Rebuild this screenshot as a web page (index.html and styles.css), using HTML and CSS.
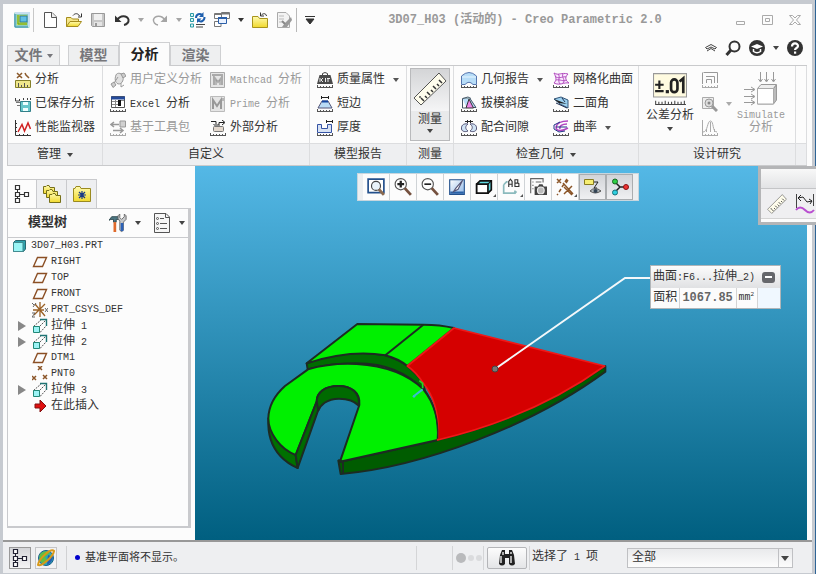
FILE: index.html
```html
<!DOCTYPE html>
<html lang="zh-CN">
<head>
<meta charset="utf-8">
<title>3D07_H03 (活动的) - Creo Parametric 2.0</title>
<link rel="stylesheet" href="styles.css">
</head>
<body>
<svg class="sprite" aria-hidden="true">
  <defs>
    <linearGradient id="yl" x1="0" y1="0" x2="0" y2="1"><stop offset="0" stop-color="#fffbb0"/><stop offset="1" stop-color="#f1d92c"/></linearGradient>
    <linearGradient id="steel" x1="0" y1="0" x2="1" y2="1"><stop offset="0" stop-color="#fff"/><stop offset="1" stop-color="#8fb8e8"/></linearGradient>
  </defs>
  <symbol id="ticks" viewBox="0 0 16 16"><path d="M0 15.5H16M.5 13v2M3.5 14v1M6.5 14v1M9.5 14v1M12.5 14v1M15.5 13v2" fill="none" stroke="currentColor" shape-rendering="crispEdges"/></symbol>
  <symbol id="drop" viewBox="0 0 6 4"><path d="M0 0H6L3 4Z" fill="currentColor"/></symbol>
  <symbol id="app" viewBox="0 0 16 16"><rect width="16" height="16" rx="2" fill="#8fd0c0"/><path d="M1 1H15V15" fill="none" stroke="#c7dff0" stroke-width="2"/><path d="M1 2V15H14" fill="none" stroke="#3c8db8" stroke-width="1"/><rect x="3" y="3" width="10" height="10" fill="#cde23c"/><path d="M4 3V12H13" fill="none" stroke="#5a9a2c"/><rect x="6" y="4" width="7" height="6" fill="#5fbfe4" stroke="#2b7aa0"/></symbol>
  <symbol id="new" viewBox="0 0 16 16"><path d="M2.5 .5H10L14.500 5V15.500H2.500Z" fill="#fff" stroke="#555"/><path d="M9.500 .5V5.500H14.500" fill="#eee" stroke="#555"/></symbol>
  <symbol id="open" viewBox="0 0 16 16"><path d="M.5 14.500V5.500H5L6.500 7H12.500V9" fill="#f6e78a" stroke="#a58c1e"/><path d="M.5 14.500L4 9.500H15.500L12 14.500Z" fill="url(#yl)" stroke="#a58c1e"/><path d="M7 3.500C9 1 12 1 13.500 4M15.500 1.500V5H12" fill="none" stroke="#333"/></symbol>
  <symbol id="save" viewBox="0 0 16 16"><path d="M1.500 1.500H14.500V14.500H2.500L1.500 13.500Z" fill="#c7c7c7" stroke="#999"/><path d="M4 2H12V8H4Z" fill="#f0f0f0"/><path d="M4 10H12V14H4Z" fill="#e4e4e4"/><path d="M5 11H7V14H5Z" fill="#999"/></symbol>
  <symbol id="undo" viewBox="0 0 16 16"><path d="M3 8C6 3 13 3 14.500 7.500C15 10 13 12.500 10 13" fill="none" stroke="currentColor" stroke-width="2"/><path d="M1 3.500V10H7.500Z" fill="currentColor"/></symbol>
  <symbol id="redo" viewBox="0 0 16 16"><path d="M13 8C10 3 3 3 1.500 7.500C1 10 3 12.500 6 13" fill="none" stroke="currentColor" stroke-width="1.500"/><path d="M15 3.500V10H8.500Z" fill="currentColor"/></symbol>
  <symbol id="regen" viewBox="0 0 16 16"><path d="M.5 1.500h3v3h-3zM.5 6.500h3v3h-3zM.5 12h3v3h-3z" fill="#d8f4f4" stroke="#2a9aa5"/><path d="M6 12.500H15M6 15H13" stroke="#444"/><path d="M6 6C6 2 10 1 12 3M14.500 5C14.500 9 11 10.500 8 8.500" fill="none" stroke="#1e5fae" stroke-width="2"/><path d="M13.500 0V5H9ZM7 11V6.500H11.500Z" fill="#1e5fae"/></symbol>
  <symbol id="wins" viewBox="0 0 16 16"><path d="M.5 1.500H7.500V6.500H.5ZM7.500 .5H15.500V6.500H7.500ZM.5 9.500H7V14.500H.5Z" fill="#fff" stroke="#777"/><path d="M1 2H7M8 1.500H15" stroke="#777" stroke-width="2"/><path d="M4.500 5.500H12.500V11.500H4.500Z" fill="#eaf2ff" stroke="#2b5fa8"/><path d="M4 6H13" stroke="#2b5fa8" stroke-width="2"/></symbol>
  <symbol id="foldclose" viewBox="0 0 16 16"><path d="M.5 15.500V4.500H6L7.500 6.500H15.500V15.500Z" fill="url(#yl)" stroke="#a8941c"/><path d="M14.500 4C14 1 11 1 9 3.500M8.500 .5V4H12" fill="none" stroke="#333"/></symbol>
  <symbol id="edit" viewBox="0 0 16 16"><path d="M1.500 .5H10L13.500 4V15.500H1.500Z" fill="#f3f3f3" stroke="#aaa"/><path d="M3 4H8M3 7H8M3 10H6" stroke="#bbb"/><path d="M15 5L9 11L6 15H11L16 8Z" fill="#999"/><path d="M6 9L9 12" stroke="#888" stroke-width="2"/></symbol>
  <symbol id="analysis" viewBox="0 0 16 16"><path d="M2 1L7 6M7 1L2 6M10 1L11 3L14 6" fill="none" stroke="#8b5a2b" stroke-width="1.500"/><path d="M.5 8.500H15.500V15.500H.5Z" fill="#efe78a" stroke="#85802a"/><path d="M3.500 11V15M6.500 13V15M9.500 11V15M12.500 13V15" stroke="#555"/></symbol>
  <symbol id="saved" viewBox="0 0 16 16"><path d="M.5 2V5H4.500M4.500 3V5M8.500 4V2M12.500 4V2M15.500 4V2" fill="none" stroke="#444"/><path d="M5.500 5.500H15.500V15.500H5.500Z" fill="#67c7cb" stroke="#317f88"/><path d="M8 6H13V9H8ZM8 12H13V15H8Z" fill="#edffff"/><path d="M1 6.500H5M2 9.500H5" stroke="#777"/></symbol>
  <symbol id="perf" viewBox="0 0 16 16"><path d="M.5 0V15.500H16M0 3.500H2M0 7.500H2M0 11.500H2M4.500 14V16M8.500 14V16M12.500 14V16" fill="none" stroke="#333"/><path d="M3 12L7 4.500L9.500 11L13 3L15.500 9" fill="none" stroke="#d02020" stroke-width="1.500"/></symbol>
  <symbol id="uda" viewBox="0 0 16 16"><path d="M6 3C7 0 13 1 13 5C14 9 11 12 9 12C6 12 4 8 6 3Z" fill="#e0e0e0" stroke="#999"/><path d="M1 12L4 10L6 13L3 15.500ZM11 2L14 1L16 4L13 6Z" fill="#ccc" stroke="#999"/><path d="M4 11L8 5M11 11V15L14 13" fill="none" stroke="#999"/></symbol>
  <symbol id="excel" viewBox="0 0 16 16"><path d="M1.500 .5H14.500V11.500H1.500Z" fill="#fff" stroke="#555"/><path d="M1 2H15" stroke="#244a9a" stroke-width="3"/><path d="M2 5.500H8M2 8.500H8M5.500 4V11M11 4.500H14" stroke="#888"/><path d="M8 4H11V10H8Z" fill="#111"/><use href="#ticks"/></symbol>
  <symbol id="tools" viewBox="0 0 16 16"><path d="M10 1H15.500V7H10Z" fill="#d0d0d0" stroke="#999"/><path d="M1 4.500H9M4 2L1 4.500L4 7M3 10.500H13M10 8L13 10.500L10 13" fill="none" stroke="#999" stroke-width="1.500"/><use href="#ticks"/></symbol>
  <symbol id="mathcad" viewBox="0 0 16 16"><path d="M.5 .5H14.500V15.500H.5Z" fill="#e5e5e5" stroke="#aaa"/><path d="M2 3H12V13M4 13V5L8 10L12 5V13" fill="none" stroke="#aaa" stroke-width="2"/><path d="M6 13V8M10 13V8" stroke="#888"/></symbol>
  <symbol id="prime" viewBox="0 0 16 16"><path d="M.5 .5H14.500V15.500H.5Z" fill="#e5e5e5" stroke="#bbb"/><path d="M3 13V4L7 10L11 4V13" fill="none" stroke="#999" stroke-width="2"/><path d="M13 2V5" stroke="#888"/></symbol>
  <symbol id="ext" viewBox="0 0 16 16"><path d="M1 1.500H6V5M3.500 4L6 6.500L8.500 4M9 6V2.500H14M12 0L15 2.500L12 5" fill="none" stroke="#222"/><rect x="3.500" y="6.500" width="10" height="5" rx="1" fill="#e3d8cd" stroke="#777"/><use href="#ticks"/></symbol>
  <symbol id="mass" viewBox="0 0 16 16"><path d="M5.500 3V1.500Q8 -.5 10.500 1.500V3" fill="none" stroke="#444"/><path d="M2.500 3H13.500L16 12H0Z" fill="#4a4a4a"/><path d="M3 6V10M6 6L4 8L6 10M8.500 6V10M11 6V10M10 6.500H13" fill="none" stroke="#eee"/><use href="#ticks"/></symbol>
  <symbol id="shortedge" viewBox="0 0 16 16"><path d="M4 1.500H12M4.500 0V3M11.500 0V3" stroke="#222"/><path d="M5 5H11L15 12H1Z" fill="#b9dcf6" stroke="#557"/><path d="M5 5.500H11" stroke="#1446a0" stroke-width="2"/><use href="#ticks"/></symbol>
  <symbol id="thick" viewBox="0 0 16 16"><path d="M.5 4.500H4.500V8.500H10.500V4.500H14.500V12.500H.5Z" fill="#d7e2f3" stroke="#3553a4"/><path d="M9 1.500H16M9.500 0V3M15.500 0V3" stroke="#222"/><use href="#ticks"/></symbol>
  <symbol id="ruler" viewBox="0 0 34 34"><path d="M1 26L26 1L33 9L8 33Z" fill="#fffdec" stroke="#555"/><path d="M11 29L8 26M14 26L12 24M17 23L14 20M20 20L18 18M23 17L20 14M26 14L24 12M29 11L26 8" stroke="#333" stroke-width="1.500"/><circle cx="7" cy="25" r="1" fill="#555"/></symbol>
  <symbol id="geo" viewBox="0 0 16 16"><path d="M.5 12.500V4Q8 -3 15.500 4V12.500H12Q8 8 4 12.500Z" fill="#b7ddf8" stroke="#5575ae"/><path d="M1 5H15" stroke="#e8f6ff"/><use href="#ticks"/></symbol>
  <symbol id="draft" viewBox="0 0 16 16"><path d="M1.500 2.500H9L15 11.500H5.500" fill="#b9dcf8" stroke="#456"/><path d="M1.500 2.500L7 1L10 2.500" fill="#dff" stroke="#456"/><path d="M8 3L12.500 12H5Z" fill="#ee86e8" stroke="#333"/><path d="M1.500 3V12H5" fill="none" stroke="#456"/><use href="#ticks"/></symbol>
  <symbol id="fit" viewBox="0 0 16 16"><path d="M7 4C2 3 0 6 .5 9C1 12 5 12 7 11C4 9 4 6 7 4ZM9 4C14 3 16 6 15.500 9C15 12 11 12 9 11C12 9 12 6 9 4Z" fill="#cfe2f4" stroke="#557"/><path d="M4 1.500H12M6.500 0V3M9.500 0V3" stroke="#222"/><use href="#ticks"/></symbol>
  <symbol id="mesh" viewBox="0 0 16 16"><path d="M1 1C6 4 8 0 15 2C11 6 13 9 16 11C11 10 7 14 1 11C4 8 3 5 1 1ZM5 2C8 5 4 8 7 12M10 2C8 5 13 8 10 11M3 5C7 7 10 4 13 5M3 8C7 7 10 10 14 8" fill="#fae8ff" stroke="#b14bbd"/><use href="#ticks"/></symbol>
  <symbol id="dihedral" viewBox="0 0 16 16"><path d="M1 3L8 1L15 4V12L7 8Z" fill="#9bd0f0" stroke="#357"/><path d="M1 3L14 8L6 7Z" fill="#222"/><path d="M3 7L14 12M9 2L12 6" stroke="#235" fill="none"/><use href="#ticks"/></symbol>
  <symbol id="curv" viewBox="0 0 16 16"><path d="M15 1C9 1 4 3 3 7C3 11 8 12 15 8M14 4C9 4 6 6 7 9" fill="none" stroke="#b145c0" stroke-width="1.500"/><path d="M7 2L1 5V9L6 12L12 11" fill="none" stroke="#238"/><path d="M3 7H14" stroke="#238"/><use href="#ticks"/></symbol>
  <symbol id="tol" viewBox="0 0 32 32"><path d="M.5 1.500H31.500V23.500H.5Z" fill="#fffbe0" stroke="#999"/><path d="M2 12H10M6 8V16M2 18H10" stroke="#222" stroke-width="2"/><rect x="12" y="17" width="3" height="3" fill="#222"/><rect x="17" y="7" width="6" height="12" rx="3" fill="none" stroke="#222" stroke-width="2.500"/><path d="M25 9L28.500 6V20" fill="none" stroke="#222" stroke-width="2.500"/><path d="M2 30.500H31M2.500 27V30M5.500 28V30M8.500 28V30M11.500 27V30M14.500 28V30M17.500 28V30M20.500 27V30M23.500 28V30M26.500 28V30M29.500 27V30" stroke="#444"/></symbol>
  <symbol id="sens" viewBox="0 0 16 16"><path d="M1.500 .5H15.500V11M.5 12V.5M4 4.500H12.500V11M4.500 11V7.500H9.500V11.500" fill="none" stroke="#999"/><use href="#ticks"/></symbol>
  <symbol id="opt" viewBox="0 0 16 16"><path d="M.5 1.500H11.500V12.500H.5Z" fill="#eee" stroke="#aaa"/><circle cx="7" cy="7" r="4" fill="#ddd" stroke="#999"/><circle cx="7" cy="7" r="1.500" fill="#888"/><path d="M10 10L15 15" stroke="#999" stroke-width="3"/></symbol>
  <symbol id="stat" viewBox="0 0 16 16"><path d="M1 12C6 12 5 1 8.500 1S10 12 15 12M4.500 9V12M8.500 2V12M12.500 9V12M.5 0V15" fill="none" stroke="#aaa"/><use href="#ticks"/></symbol>
  <symbol id="sim" viewBox="0 0 34 34"><path d="M16.500 0V9M22.500 0V9M29.500 0V9M14.500 7L16.500 10L18.500 7M20.500 7L22.500 10L24.500 7M27.500 7L29.500 10L31.500 7M0 17.500H10M0 24.500H10M0 30.500H10M7 15L11 17.500L7 20M7 22L11 24.500L7 27M7 28L11 30.500L7 33" fill="none" stroke="#999"/><path d="M13.500 16.500L17 12.500H32.500L29.500 16.500V32H13.500Z" fill="#eee" stroke="#999"/><path d="M32.500 13V28L29.500 32V16.500Z" fill="#bbb" stroke="#999"/><path d="M13.500 16.500H29.500V32H13.500Z" fill="#fff" stroke="#aaa"/></symbol>
  <symbol id="tree" viewBox="0 0 16 18"><path d="M1.500 .5h4v4h-4zM1.500 7.500h4v4h-4zM1.500 13.500h4v4h-4zM10.500 7.500h4v4h-4z" fill="#fff" stroke="currentColor" stroke-width="1.200"/><path d="M3.500 5V7M3.500 12V13M6 9.500H10" stroke="currentColor"/></symbol>
  <symbol id="folders" viewBox="0 0 18 18"><path d="M.5 8.500V1.500H3L4 .5H6L7 2.500H11.500V8.500Z" fill="url(#yl)" stroke="#77701a"/><path d="M3.500 12.500V5.500H6L7 4.500H9L10 6.500H14.500V12.500Z" fill="url(#yl)" stroke="#77701a"/><path d="M6.500 17.500V9.500H9L10 8.500H12L13 10.500H17.500V17.500Z" fill="url(#yl)" stroke="#77701a"/></symbol>
  <symbol id="fav" viewBox="0 0 18 16"><path d="M.5 15.500V2.500H2L3 .5H7L8 2.500H17.500V15.500Z" fill="url(#yl)" stroke="#9a8a20"/><path d="M9 5V13M5 9H13M6 6L12 12M12 6L6 12" stroke="#183a86" stroke-width="1.200"/></symbol>
  <symbol id="hammer" viewBox="0 0 20 20"><path d="M0 7L3 3H10L11 6H8V9H5V6H2Z" fill="#4e7884" stroke="#2d464d"/><path d="M5 9H8V20H5Z" fill="#e06a2c"/><path d="M12 0V4L14 6L17 3V0L19 2V6L16 9V18Q14 21 12 18V8L10 5V2Z" fill="#c7c9cb" stroke="#666"/><path d="M13 10H16V19H13Z" fill="#2c62b8"/></symbol>
  <symbol id="list" viewBox="0 0 16 20"><path d="M.5 .5H12L15.500 4V19.500H.5Z" fill="#f6f6f6" stroke="#555"/><path d="M11.500 .5V4.500H15.500" fill="none" stroke="#555"/><path d="M6 5.500H10M6 10.500H13M6 15.500H13" stroke="#555"/><circle cx="3.500" cy="5.500" r="1" fill="none" stroke="#555"/><circle cx="3.500" cy="10.500" r="1" fill="none" stroke="#555"/><circle cx="3.500" cy="15.500" r="1" fill="none" stroke="#555"/></symbol>
  <symbol id="part" viewBox="0 0 16 16"><path d="M1.500 4.500L3.500 2.500H13.500V11L11.500 13.500H1.500Z" fill="#2fa3ad" stroke="#2a6870"/><path d="M1.500 4.500H11V13.500H1.500Z" fill="#9af5f5" stroke="#438b90"/></symbol>
  <symbol id="plane" viewBox="0 0 16 16"><path d="M1.500 12.500L5.500 3.500H14.500L10.500 12.500Z" fill="none" stroke="#8b4f24" stroke-width="1.400"/></symbol>
  <symbol id="csys" viewBox="0 0 16 16"><path d="M8 0V15M2 13L13 2M3 2L13 14M1 8H12" stroke="#9a6025" stroke-width="1.300"/><path d="M0 1L2 3M4 1L1 5M0 11H3L0 15H3M13 6L16 10M16 6L13 10" stroke="#666" fill="none"/></symbol>
  <symbol id="extrude" viewBox="0 0 16 16"><path d="M1.500 8.500L9 2M7.500 8.500L14 2M8 14.500L14 8" stroke="#555" stroke-dasharray="2 1"/><path d="M8 1.500H14.500V8" fill="none" stroke="#1f7474" stroke-width="1.400"/><path d="M1.500 8.500H7.500V14.500H1.500Z" fill="#9cf3f5" stroke="#287"/></symbol>
  <symbol id="points" viewBox="0 0 16 16"><path d="M6 0L10 4M10 0L6 4M0 10L4 14M4 10L0 14M11 9L15 13M15 9L11 13" stroke="#8b5528" stroke-width="1.500"/></symbol>
  <symbol id="insert" viewBox="0 0 16 16"><path d="M3 6H8V2L14 8L8 14V10H3Z" fill="#e01010" stroke="#801010"/></symbol>
  <symbol id="refit" viewBox="0 0 16 16"><path d="M1 1H15V13H1Z" fill="#fff" stroke="#23508c" stroke-width="1.500"/><circle cx="8" cy="7" r="4" fill="#e9f3fa" stroke="#444"/><path d="M10.500 10L15 15" stroke="#8b6a50" stroke-width="2.500"/></symbol>
  <symbol id="zin" viewBox="0 0 16 16"><circle cx="6" cy="5.500" r="5" fill="#fff" stroke="#555"/><path d="M3 5.500H9M6 2.500V8.500" stroke="#222" stroke-width="2"/><path d="M9.500 9L15 15" stroke="#75513f" stroke-width="2.500"/></symbol>
  <symbol id="zout" viewBox="0 0 16 16"><circle cx="6" cy="5.500" r="5" fill="#fff" stroke="#555"/><path d="M3 5.500H9" stroke="#222" stroke-width="1.500"/><path d="M9.500 9L15 15" stroke="#75513f" stroke-width="2.500"/></symbol>
  <symbol id="repaint" viewBox="0 0 16 16"><path d="M1.500 1.500H14.500V14.500H1.500Z" fill="url(#steel)" stroke="#23508c"/><path d="M2 12H14V14H2Z" fill="#2a62a8"/><path d="M13 2L7 9L5 12L9 10Z" fill="#fff" stroke="#557"/></symbol>
  <symbol id="shade" viewBox="0 0 16 16"><path d="M1.500 5.500L4.500 2.500H14.500V10.500L11.500 13.500H1.500Z" fill="#5dd7df" stroke="#111" stroke-width="1.500"/><path d="M1.500 5.500H11.500V13.500H1.500Z" fill="#fff" stroke="#111" stroke-width="1.500"/><path d="M11.500 5.500L14.500 2.500" stroke="#111"/></symbol>
  <symbol id="views" viewBox="0 0 16 16"><path d="M1.500 6V13.500H11.500V11M1.500 6L4 3.500H5M11 14L13 12" fill="none" stroke="#8bbabd" stroke-width="1.500"/><path d="M6 8V3L7.500 1L9 3V8M6 5.500H9M11.500 1V8M11 1.500H14V4.500H11M14 4.500L15 5V7.500H11" fill="none" stroke="#333"/></symbol>
  <symbol id="camera" viewBox="0 0 16 16"><path d="M1.500 13.500V.5H12.500V4M3 3.500H4M6 3.500H11M3 6.500H4M3 9.500H4" fill="none" stroke="#666"/><path d="M5 7.500H8L9 5.500H12L13 7.500H16V15H5Z" fill="#444"/><circle cx="10.500" cy="11" r="3" fill="#bbb" stroke="#eee"/></symbol>
  <symbol id="datum" viewBox="0 0 18 18"><path d="M1 1L5 5M5 1L1 5M11 1L9 4M8 6L6 9M5 11L3 14M2 16L1 17M8 9L16 17M16 8L8 16M12 2L10 5M7 5L17 16" stroke="#8b5528" stroke-width="1.500" fill="none"/></symbol>
  <symbol id="annot" viewBox="0 0 18 18"><path d="M.5 1.500H9.500V6.500H.5Z" fill="#f7ee72" stroke="#887c20"/><path d="M10 4H14L10 10H13" fill="none" stroke="#222"/><path d="M6 13Q11 8 17 13Q11 17 6 13Z" fill="#aab3b8" stroke="#555"/><circle cx="11.500" cy="13" r="2" fill="#345"/></symbol>
  <symbol id="spin" viewBox="0 0 18 18"><path d="M4 4L9 9H14M9 9L4 14" stroke="#222" stroke-width="1.500" fill="none"/><circle cx="4" cy="3.500" r="2.500" fill="#2fcf45" stroke="#166320"/><circle cx="15" cy="9" r="2.500" fill="#e33" stroke="#811"/><circle cx="4" cy="14.500" r="2.500" fill="#2ecfe0" stroke="#16707c"/></symbol>
  <symbol id="globe" viewBox="0 0 18 18"><circle cx="9" cy="9" r="7.500" fill="#2ba9b6" stroke="#185c88"/><path d="M3 5Q8 0 13 4L8 8L10 12L5 14Q1 10 3 5Z" fill="#63bd43"/><path d="M11 6L16 8Q15 14 10 16Z" fill="#245fb2"/><path d="M1 16C4 18 16 8 17 2C14 -1 2 9 1 16Z" fill="none" stroke="#d89918" stroke-width="2"/></symbol>
  <symbol id="binoc" viewBox="0 0 18 18"><path d="M2 6L4 1H7V5H11V1H14L16 6L17 15Q14 18 11 15V9H7V15Q4 18 1 15Z" fill="#222"/><path d="M3 7V14M5 3V6M13 7V14M13 3V5" stroke="#ddd" stroke-width="1.500"/></symbol>
</svg>

<div class="window">
  <header class="titlebar">
    <div class="quick">
      <button class="ic app" aria-label="应用程序"><svg><use href="#app"/></svg></button>
      <button class="ic" aria-label="新建"><svg><use href="#new"/></svg></button>
      <button class="ic" aria-label="打开"><svg><use href="#open"/></svg></button>
      <button class="ic" aria-label="保存"><svg><use href="#save"/></svg></button>
      <button class="ic" aria-label="撤消"><svg><use href="#undo"/></svg></button>
      <button class="ic arrow off" aria-label="撤消列表"><svg><use href="#drop"/></svg></button>
      <button class="ic off" aria-label="重做"><svg><use href="#redo"/></svg></button>
      <button class="ic arrow off" aria-label="重做列表"><svg><use href="#drop"/></svg></button>
      <button class="ic" aria-label="重新生成"><svg><use href="#regen"/></svg></button>
      <button class="ic" aria-label="窗口"><svg><use href="#wins"/></svg></button>
      <button class="ic arrow" aria-label="窗口列表"><svg><use href="#drop"/></svg></button>
      <button class="ic" aria-label="关闭"><svg><use href="#foldclose"/></svg></button>
      <button class="ic last" aria-label="编辑"><svg><use href="#edit"/></svg></button>
      <button class="ic more" aria-label="自定义工具栏"><svg viewBox="0 0 10 8"><path d="M0 .5H10M1 3H9L5 8Z" fill="currentColor" stroke="currentColor"/></svg></button>
    </div>
    <h1>3D07_H03 (活动的) - Creo Parametric 2.0</h1>
    <div class="winbtns">
      <button aria-label="最小化"><svg viewBox="0 0 12 12"><path d="M1.500 7.500H9.500V10.500H1.500Z" fill="none" stroke="#aaa"/></svg></button>
      <button aria-label="最大化"><svg viewBox="0 0 12 12"><path d="M.5 1.500H10.500V10.500H.5ZM3.500 4.500H7.500V7.500H3.500Z" fill="none" stroke="#aaa"/></svg></button>
      <button aria-label="关闭窗口"><svg viewBox="0 0 12 12"><path d="M.5 1.500H3.500L6 4L8.500 1.500H11.500L7.500 6L11.500 10.500H8.500L6 8L3.500 10.500H.5L4.500 6Z" fill="none" stroke="#aaa"/></svg></button>
    </div>
  </header>

  <nav class="tabs">
    <button class="tab file">文件<svg class="dd"><use href="#drop"/></svg></button>
    <button class="tab">模型</button>
    <button class="tab active">分析</button>
    <button class="tab">渲染</button>
    <div class="help">
      <button aria-label="折叠功能区"><svg class="chev" viewBox="0 0 12 8"><path d="M.5 3.500L6 .5L11.500 3.500L10 5L6 3L2 5ZM2 7L6 4.500L10 7" fill="none" stroke="#444"/></svg></button>
      <button aria-label="搜索"><svg viewBox="0 0 16 16"><circle cx="9.500" cy="6.500" r="5" fill="none" stroke="#333" stroke-width="2"/><path d="M6 10L1.500 15" stroke="#333" stroke-width="3"/></svg></button>
      <button aria-label="学习"><svg viewBox="0 0 16 16"><circle cx="8" cy="8" r="8" fill="#333"/><path d="M2 6.500L8 4L14 6.500L8 9Z" fill="#fff"/><path d="M4.500 9V11.500Q8 14 11.500 11.500V9" fill="none" stroke="#fff" stroke-width="1.500"/></svg></button>
      <button aria-label="学习列表"><svg class="dd"><use href="#drop"/></svg></button>
      <button aria-label="帮助"><svg viewBox="0 0 16 16"><circle cx="8" cy="8" r="8" fill="#333"/><path d="M5 6.500C5 2.500 11 2.500 11 6C11 8 8 8 8 10" fill="none" stroke="#fff" stroke-width="2.200"/><rect x="7" y="11.500" width="2.200" height="2.200" fill="#fff"/></svg></button>
    </div>
  </nav>

  <section class="ribbon">
    <div class="group">
      <div class="cmds"><div class="col">
        <button class="cmd"><svg><use href="#analysis"/></svg>分析</button>
        <button class="cmd"><svg><use href="#saved"/></svg>已保存分析</button>
        <button class="cmd"><svg><use href="#perf"/></svg>性能监视器</button>
      </div></div>
      <div class="cap">管理<svg class="dd"><use href="#drop"/></svg></div>
    </div>
    <div class="group">
      <div class="cmds two"><div class="col">
        <button class="cmd" disabled><svg><use href="#uda"/></svg>用户定义分析</button>
        <button class="cmd"><svg><use href="#excel"/></svg><span><span class="en">Excel </span>分析</span></button>
        <button class="cmd" disabled><svg><use href="#tools"/></svg>基于工具包</button>
      </div><div class="col">
        <button class="cmd" disabled><svg><use href="#mathcad"/></svg><span><span class="en">Mathcad </span>分析</span></button>
        <button class="cmd" disabled><svg><use href="#prime"/></svg><span><span class="en">Prime </span>分析</span></button>
        <button class="cmd"><svg><use href="#ext"/></svg>外部分析</button>
      </div></div>
      <div class="cap">自定义</div>
    </div>
    <div class="group">
      <div class="cmds"><div class="col">
        <button class="cmd"><svg><use href="#mass"/></svg>质量属性<svg class="dd"><use href="#drop"/></svg></button>
        <button class="cmd"><svg><use href="#shortedge"/></svg>短边</button>
        <button class="cmd"><svg><use href="#thick"/></svg>厚度</button>
      </div></div>
      <div class="cap">模型报告</div>
    </div>
    <div class="group">
      <div class="cmds solo">
        <button class="measure"><span class="face"><svg><use href="#ruler"/></svg></span>测量<svg class="dd"><use href="#drop"/></svg></button>
      </div>
      <div class="cap">测量</div>
    </div>
    <div class="group">
      <div class="cmds"><div class="col">
        <button class="cmd"><svg><use href="#geo"/></svg>几何报告<svg class="dd"><use href="#drop"/></svg></button>
        <button class="cmd"><svg><use href="#draft"/></svg>拔模斜度</button>
        <button class="cmd"><svg><use href="#fit"/></svg>配合间隙</button>
      </div><div class="col">
        <button class="cmd"><svg><use href="#mesh"/></svg>网格化曲面</button>
        <button class="cmd"><svg><use href="#dihedral"/></svg>二面角</button>
        <button class="cmd"><svg><use href="#curv"/></svg>曲率<svg class="dd"><use href="#drop"/></svg></button>
      </div></div>
      <div class="cap">检查几何<svg class="dd"><use href="#drop"/></svg></div>
    </div>
    <div class="group">
      <div class="cmds study">
        <button class="big"><svg><use href="#tol"/></svg>公差分析<svg class="dd"><use href="#drop"/></svg></button>
        <div class="col">
          <button class="cmd" disabled aria-label="灵敏度"><svg><use href="#sens"/></svg></button>
          <button class="cmd" disabled aria-label="优化"><svg><use href="#opt"/></svg><svg class="dd"><use href="#drop"/></svg></button>
          <button class="cmd" disabled aria-label="统计"><svg><use href="#stat"/></svg></button>
        </div>
        <button class="big sim" disabled><svg><use href="#sim"/></svg><span class="en">Simulate</span>分析</button>
      </div>
      <div class="cap">设计研究</div>
    </div>
    <div class="group"><div class="cmds"></div><div class="cap"></div></div>
  </section>

  <main class="work">
    <aside class="side">
      <div class="sidetabs">
        <button class="on" aria-label="模型树"><svg class="t"><use href="#tree"/></svg></button>
        <button aria-label="文件夹浏览器"><svg><use href="#folders"/></svg></button>
        <button aria-label="收藏夹"><svg><use href="#fav"/></svg></button>
      </div>
      <div class="panel">
        <div class="phead">
          <h2>模型树</h2>
          <button aria-label="设置"><svg class="pic"><use href="#hammer"/></svg><svg class="dd"><use href="#drop"/></svg></button>
          <button aria-label="显示"><svg class="pic"><use href="#list"/></svg><svg class="dd"><use href="#drop"/></svg></button>
        </div>
        <ul class="mtree">
          <li class="root"><svg><use href="#part"/></svg><span class="en">3D07_H03.PRT</span></li>
          <li><svg><use href="#plane"/></svg><span class="en">RIGHT</span></li>
          <li><svg><use href="#plane"/></svg><span class="en">TOP</span></li>
          <li><svg><use href="#plane"/></svg><span class="en">FRONT</span></li>
          <li><svg><use href="#csys"/></svg><span class="en">PRT_CSYS_DEF</span></li>
          <li class="fold"><svg><use href="#extrude"/></svg><span>拉伸<span class="en"> 1</span></span></li>
          <li class="fold"><svg><use href="#extrude"/></svg><span>拉伸<span class="en"> 2</span></span></li>
          <li><svg><use href="#plane"/></svg><span class="en">DTM1</span></li>
          <li><svg><use href="#points"/></svg><span class="en">PNT0</span></li>
          <li class="fold"><svg><use href="#extrude"/></svg><span>拉伸<span class="en"> 3</span></span></li>
          <li><svg><use href="#insert"/></svg>在此插入</li>
        </ul>
      </div>
    </aside>

    <section class="canvas">
      <svg class="scene" viewBox="195 166 612 374" preserveAspectRatio="xMinYMin meet">
        <g transform="translate(250 310) scale(.33333)" stroke="#1d2b22" stroke-width="6" stroke-linejoin="round">
          <path fill="#007000" d="M55 325C54 350 56 370 62 388C75 428 105 457 143 474L137 435Z"/>
          <path fill="#005c00" d="M272 455L563 390Q850 320 1066 168V185C850 345 520 470 272 492L265 452Z"/>
          <path fill="#006c00" d="M170 160Q290 112 406 136Q445 148 472 168L520 214L525 245Q450 160 320 160Q240 160 173 178Z"/>
          <path fill="#00f000" d="M174 178Q240 158 320 162Q450 170 520 238Q570 300 563 390L270 455L328 285C332 248 304 228 265 228C225 228 200 247 200 275L137 435C92 418 55 370 55 325C56 285 77 253 105 228Z"/>
          <path fill="#006a00" d="M200 275C200 247 225 228 265 228C304 228 332 248 326 287Q308 266 267 266C230 266 210 286 203 305L143 474L137 435Z"/>
          <path fill="none" d="M200 275L205 303M265 450L279 456V490"/>
          <path fill="#00f000" d="M170 160L322 42L520 44Q570 44 612 54L472 168Q445 146 406 136Q300 118 170 160Z"/>
          <path fill="none" d="M520 44L406 136"/>
          <path fill="#d50000" stroke="#f01818" stroke-width="5" d="M612 54L1064 168Q850 322 563 390Q572 285 520 220Q500 188 472 168Z"/>
          <path fill="none" stroke-width="4" d="M563 386Q568 298 520 234"/>
          <path fill="none" stroke="#25d425" stroke-width="5" d="M508 212L518 220V235"/>
          <path fill="none" stroke="#3ab9d4" stroke-width="6" d="M518 238L492 258"/>
          <circle cx="492" cy="259" r="4" fill="#3ab9d4" stroke="none"/>
        </g>
        <path d="M495 369L625 278H650" fill="none" stroke="#f4f8fa" stroke-width="2"/>
        <circle cx="495" cy="369" r="3" fill="#777" stroke="#444"/>
      </svg>

      <div class="viewbar">
        <button aria-label="重新调整"><svg><use href="#refit"/></svg></button>
        <button aria-label="放大"><svg><use href="#zin"/></svg></button>
        <button aria-label="缩小"><svg><use href="#zout"/></svg></button>
        <button aria-label="重画"><svg><use href="#repaint"/></svg></button>
        <button class="sub" aria-label="显示样式"><svg><use href="#shade"/></svg></button>
        <button class="sub" aria-label="已保存方向"><svg><use href="#views"/></svg></button>
        <button aria-label="视图管理器"><svg><use href="#camera"/></svg></button>
        <button class="sub" aria-label="基准显示"><svg><use href="#datum"/></svg></button>
        <button class="on" aria-label="注释显示"><svg><use href="#annot"/></svg></button>
        <button class="on" aria-label="旋转中心"><svg><use href="#spin"/></svg></button>
      </div>

      <div class="callout">
        <div class="chead"><span>曲面<span class="en">:F6...</span>拉伸<span class="en">_2)</span></span><button aria-label="折叠"></button></div>
        <table><tr><th>面积</th><td class="num">1067.85</td><td class="en">mm<sup>2</sup></td><td class="fill"></td></tr></table>
      </div>
    </section>
  </main>

  <footer class="status">
    <button class="sq on" aria-label="模型树显示"><svg><use href="#tree"/></svg></button>
    <button class="sq" aria-label="浏览器显示"><svg><use href="#globe"/></svg></button>
    <p class="msg">基准平面将不显示。</p>
    <span class="cell"></span>
    <span class="dots"><i></i><i></i><i></i></span>
    <span class="findwrap"><button class="find" aria-label="查找"><svg><use href="#binoc"/></svg></button></span>
    <label class="sel" for="filter">选择了<span class="en"> 1 </span>项</label>
    <span class="pick"><select id="filter"><option>全部</option></select></span>
  </footer>
</div>

<div class="float">
  <div class="fhead"></div>
  <div class="fbody">
    <button aria-label="测量"><svg><use href="#ruler"/></svg></button>
    <button aria-label="长度"><svg viewBox="0 0 20 20"><path d="M1.500 0V14M18.500 0V12" stroke="#444"/><path d="M3 4L8 3L12 8L17 7M3 4L6 1M3 4L6 7M17 7L14 5M17 7L15 10" fill="none" stroke="#222"/><path d="M1 16Q5 11 10 16T19 16" fill="none" stroke="#b94fd0" stroke-width="2"/></svg></button>
  </div>
</div>
</body>
</html>
```
FILE: styles.css
```css
* { box-sizing: border-box; }

body {
  margin: 0;
  height: 100vh;
  overflow: hidden;
  position: relative;
  padding-right: 1px;
  background: #2e6496;
  color: #333;
  font: 12px/16px "Liberation Mono", "Noto Sans CJK SC", monospace;
}

button {
  margin: 0;
  padding: 0;
  border: 0;
  background: none;
  color: inherit;
  font: inherit;
}

svg { display: block; flex: none; }
.sprite { position: absolute; width: 0; height: 0; }
.dd { width: 6px; height: 4px; color: #444; }
.en { font-size: 10px; white-space: pre; }

.window {
  height: 100%;
  display: flex;
  flex-direction: column;
  background: #fcfcfc;
  border: solid #c6cad0;
  border-width: 4px 3px 1px;
}

/* title bar */
.titlebar {
  display: flex;
  align-items: center;
  height: 32px;
  padding: 0 11px;
}
.quick { display: flex; align-items: center; gap: 8px; }
.ic { display: flex; align-items: center; height: 24px; }
.ic svg { width: 16px; height: 16px; }
.ic.arrow svg { width: 6px; height: 4px; }
.ic.more svg { width: 10px; height: 8px; }
.ic.off { color: #a5a5a5; }
.ic.app { padding-right: 3px; border-right: 1px solid #c8c8c8; }
.ic.last { padding-right: 4px; border-right: 1px solid #b8b8b8; }
.titlebar h1 {
  flex: 1;
  margin: 0;
  text-align: center;
  white-space: nowrap;
  font-size: 12px;
  font-weight: bold;
  color: #999;
}
.winbtns { display: flex; gap: 15px; }
.winbtns svg { width: 12px; height: 12px; }

/* ribbon tabs */
.tabs {
  display: flex;
  align-items: flex-end;
  height: 29px;
  padding: 0 5px 0 4px;
}
.tab {
  display: flex;
  align-items: center;
  justify-content: center;
  gap: 4px;
  width: 51px;
  height: 20px;
  border: 1px solid #cfd0d2;
  border-bottom: 0;
  background: #eeeff0;
  font-size: 14px;
  font-weight: bold;
  color: #77777b;
}
.tab.file { width: 53px; margin-right: 8px; }
.tab .dd { color: #77777b; }
.tab.active {
  position: relative;
  height: 24px;
  margin-bottom: -1px;
  background: #fcfcfc;
  color: #222;
}
.help {
  display: flex;
  align-items: center;
  gap: 8px;
  margin-left: auto;
  padding: 0 4px 9px 0;
}
.help svg { width: 16px; height: 16px; }
.help .chev { width: 12px; height: 8px; }
.help .dd { width: 6px; height: 4px; }

/* ribbon */
.ribbon {
  display: grid;
  grid-template-columns: 95fr 207fr 97fr 47fr 185fr 157fr 11fr;
  height: 101px;
  margin: 0 5px 0 4px;
  border: solid #c9cacc;
  border-width: 1px 0 1px 1px;
}
.group {
  display: flex;
  flex-direction: column;
  min-width: 0;
  border-right: 1px solid #dcdddf;
}
.cmds { flex: 1; display: flex; gap: 10px; padding: 2px 0 0 7px; }
.cmds.two .col { width: 90px; }
.cmd {
  display: flex;
  align-items: center;
  gap: 4px;
  height: 24px;
  white-space: nowrap;
}
.cmd svg { width: 16px; height: 16px; color: #555; }
.cmd .dd { width: 6px; height: 4px; margin-left: 4px; }
.cmd:disabled, .big:disabled { color: #999; }
.cmd:disabled svg { color: #aaa; }
.cap {
  display: flex;
  align-items: center;
  justify-content: center;
  gap: 6px;
  height: 22px;
  border-top: 1px solid #dcdddf;
  background: #eeeff1;
}
.cmds.solo { justify-content: center; padding: 2px 3px 0; }
.measure {
  display: flex;
  flex-direction: column;
  align-items: center;
  flex: 1;
  height: 73px;
  border: 1px solid #b9babc;
  background: #e9eaeb;
}
.measure .face {
  align-self: stretch;
  display: flex;
  justify-content: center;
  height: 42px;
  margin-bottom: 1px;
  padding-top: 3px;
  background: linear-gradient(#d4d5d7, #f5f5f6);
}
.measure .face svg { width: 34px; height: 34px; }
.measure .dd { margin-top: 1px; }
.cmds.study { gap: 8px; }
.big {
  display: flex;
  flex-direction: column;
  align-items: center;
  width: 48px;
  padding-top: 4px;
  line-height: 12px;
}
.big > svg { width: 34px; height: 34px; margin-bottom: 4px; }
.big > .dd { width: 6px; height: 4px; margin: 5px 0 0; }
.big.sim { margin-left: -3px; }

/* work area */
.work { flex: 1; display: flex; min-height: 0; padding-right: 5px; }
.side {
  width: 192px;
  display: flex;
  flex-direction: column;
  padding: 13px 4px 12px;
}
.sidetabs { display: flex; }
.sidetabs button {
  display: flex;
  align-items: center;
  justify-content: center;
  width: 30px;
  height: 29px;
  border: 1px solid #c9cacd;
  border-width: 1px 1px 0 0;
  background: #eeeff1;
}
.sidetabs .on { background: #fcfcfc; border-left-width: 1px; }
.sidetabs svg { width: 18px; height: 18px; }
.sidetabs .t { width: 16px; }
.panel {
  flex: 1;
  border: solid #c9cacd;
  border-width: 1px 3px 2px 1px;
}
.phead {
  display: flex;
  align-items: center;
  gap: 12px;
  height: 29px;
  padding: 0 3px 0 20px;
  border-bottom: 1px solid #c9cacd;
}
.phead h2 { flex: 1; margin: 0; font-size: 13px; }
.phead button { display: flex; align-items: center; gap: 8px; }
.pic { width: 18px; height: 20px; }
.mtree { margin: 0; padding: 0; list-style: none; }
.mtree li {
  position: relative;
  display: flex;
  align-items: center;
  gap: 3px;
  height: 16px;
  padding-left: 24px;
}
.mtree li.root { padding-left: 4px; }
.mtree svg { width: 16px; height: 16px; }
.fold::before {
  content: "";
  position: absolute;
  left: 10px;
  border: solid transparent;
  border-width: 5px 0 5px 8px;
  border-left-color: #888;
}

/* graphics area */
.canvas {
  flex: 1;
  position: relative;
  overflow: hidden;
  background: linear-gradient(#54b8e6, #005f80);
}
.scene { position: absolute; inset: 0; width: 100%; height: 100%; }
.viewbar {
  position: absolute;
  top: 7px;
  left: 162px;
  display: flex;
  padding: 0 5px;
  border: 1px solid #c8d6de;
  background: #eceef0;
}
.viewbar button {
  position: relative;
  display: flex;
  align-items: center;
  justify-content: center;
  width: 27px;
  height: 26px;
  border-right: 1px solid #cfd3d6;
  background: #fcfcfc;
}
.viewbar svg { width: 18px; height: 18px; }
.viewbar .on { border: 1px solid #aaadb0; background: linear-gradient(#d2d4d8, #eff0f2); }
.viewbar .sub::after {
  content: "";
  position: absolute;
  right: 1px;
  bottom: 3px;
  border: solid transparent;
  border-width: 3px 0 0 3px;
  border-bottom: 0;
  border-right: 3px solid #555;
}
.callout {
  position: absolute;
  top: 99px;
  left: 455px;
  width: 131px;
  border: 1px solid #b0b5b8;
  background: #fcfcfc;
}
.chead {
  display: flex;
  align-items: center;
  justify-content: space-between;
  height: 22px;
  padding: 0 5px 0 2px;
  white-space: nowrap;
  background: linear-gradient(#fcfcfc, #e0e1e3);
}
.chead button {
  width: 13px;
  height: 11px;
  border-radius: 3px;
  background: linear-gradient(#fff, #fff) center / 7px 2px no-repeat #66676b;
}
.callout table { width: 100%; border-collapse: collapse; }
.callout th, .callout td {
  height: 20px;
  padding: 0 2px;
  border-right: 1px solid #d4d4d4;
  font-weight: normal;
  line-height: 16px;
}
.callout .num { font-weight: bold; color: #666; }
.callout sup { font-size: 6px; line-height: 0; }
.callout .fill { width: 23px; border: 0; background: #f0f8ff; }

/* floating tool window */
.float {
  position: absolute;
  top: 166px;
  right: 0;
  width: 58px;
  height: 59px;
  border: 3px solid #b4b5b7;
  border-right: 0;
  background: #fcfcfc;
}
.fhead { height: 20px; border-bottom: 1px solid #c4c5c7; background: linear-gradient(#f8f8f8, #e2e3e5); }
.fbody {
  display: flex;
  align-items: center;
  gap: 8px;
  height: 30px;
  padding-left: 6px;
  overflow: hidden;
  background: #efeff1;
  border-bottom: 1px solid #d4d4d4;
}
.fbody svg { width: 20px; height: 20px; }

/* status bar */
.status {
  display: flex;
  align-items: center;
  height: 33px;
  padding: 0 19px 0 6px;
  border-top: 2px solid #989898;
  background: #eeeff1;
}
.sq {
  display: flex;
  align-items: center;
  justify-content: center;
  width: 22px;
  height: 22px;
  margin-right: 4px;
  border: 1px solid #c4c5c8;
  background: #f2f2f3;
}
.sq svg { width: 18px; height: 18px; }
.sq.on { border-color: #999; background: linear-gradient(#d4d5d8, #f4f4f5); color: #223; }
.msg {
  flex: 1;
  display: flex;
  align-items: center;
  gap: 5px;
  height: 24px;
  margin: 0 0 0 5px;
  padding-left: 8px;
  border-left: 1px solid #d0d1d3;
  font-size: 11px;
}
.msg::before { content: ""; width: 5px; height: 5px; border-radius: 50%; background: #00c; }
.cell { width: 36px; height: 24px; border-left: 1px solid #d4d5d7; }
.dots {
  display: flex;
  align-items: center;
  gap: 2px;
  width: 31px;
  height: 24px;
  padding-left: 3px;
  border-left: 1px solid #d4d5d7;
}
.dots i { width: 6px; height: 6px; border-radius: 50%; background: #dadbdd; }
.dots i:first-child { width: 10px; height: 10px; background: #b9babc; }
.findwrap {
  display: flex;
  align-items: center;
  width: 47px;
  height: 24px;
  padding-left: 3px;
  border: solid #d4d5d7;
  border-width: 0 1px;
}
.find {
  display: flex;
  align-items: center;
  justify-content: center;
  width: 40px;
  height: 22px;
  border: 1px solid #b4b5b8;
  border-radius: 2px;
  background: linear-gradient(#fcfcfc, #e4e5e7);
}
.find svg { width: 18px; height: 18px; }
.sel { width: 97px; padding-left: 2px; white-space: nowrap; }
.pick { position: relative; width: 166px; height: 20px; }
.pick select {
  appearance: none;
  width: 100%;
  height: 20px;
  padding: 0 4px;
  border: 1px solid #bfc0c3;
  border-radius: 0;
  background: linear-gradient(#e9eaec, #fcfcfc);
  color: #333;
  font: inherit;
}
.pick::after {
  content: "";
  position: absolute;
  right: 4px;
  top: 8px;
  border: solid transparent;
  border-width: 5px 4px 0;
  border-top-color: #444;
}
.pick::before {
  content: "";
  position: absolute;
  right: 14px;
  top: 1px;
  height: 18px;
  border-left: 1px solid #bfc0c3;
}
```
